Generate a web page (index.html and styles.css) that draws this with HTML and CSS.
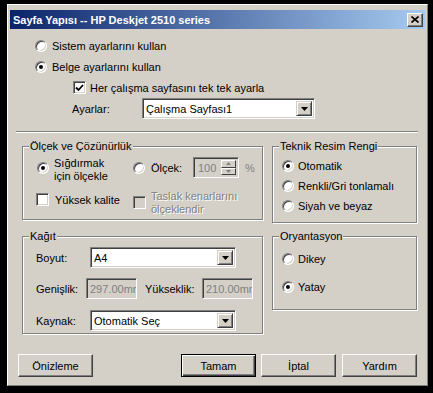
FILE: index.html
```html
<!DOCTYPE html>
<html lang="tr">
<head>
    <meta charset="UTF-8">
    <title>Sayfa Yapısı</title>
    <link rel="stylesheet" href="styles.css">
</head>
<body>
    <div class="window">
        <div class="titlebar">
            <span class="title">Sayfa Yapısı -- HP Deskjet 2510 series</span>
            <span class="close">
                <svg width="8" height="7" viewBox="0 0 8 7"><path d="M0.5 0.5 L7.5 6.5 M7.5 0.5 L0.5 6.5" stroke="#000" stroke-width="1.6" fill="none"/></svg>
            </span>
        </div>

        <div class="scope">
            <div class="row"><span class="radio"></span><span class="opt-text">Sistem ayarlarını kullan</span></div>
            <div class="row"><span class="radio on"></span><span class="opt-text">Belge ayarlarını kullan</span></div>
            <div class="row sub"><span class="check"><svg width="9" height="8" viewBox="0 0 9 8"><path d="M1 3.5 L3.5 6 L8 1" stroke="#000" stroke-width="1.8" fill="none"/></svg></span><span class="chk-text">Her çalışma sayfasını tek tek ayarla</span></div>
            <div class="row sub-label">
                <span class="ayar-label">Ayarlar:</span>
                <div class="combo ayar-combo">
                    <span class="combo-value">Çalışma Sayfası1</span>
                    <span class="drop"><svg width="7" height="4" viewBox="0 0 7 4"><path d="M0 0 H7 L3.5 4 Z" fill="#000"/></svg></span>
                </div>
            </div>
        </div>

        <div class="separator"></div>

        <div class="groups">
            <div class="group scale-group">
                <span class="group-title">Ölçek ve Çözünürlük</span>
                <div class="scale-row">
                    <div class="fit-opt">
                        <span class="radio on"></span>
                        <span class="two-line">Sığdırmak<br>için ölçekle</span>
                    </div>
                    <div class="pct-opt">
                        <span class="radio"></span>
                        <span class="pct-label">Ölçek:</span>
                        <div class="spin">
                            <span class="spin-value">100</span>
                            <span class="spin-btns">
                                <span class="spin-btn"><svg width="5" height="3" viewBox="0 0 5 3"><path d="M2.5 0 L5 3 H0 Z" fill="#808080"/></svg></span>
                                <span class="spin-btn"><svg width="5" height="3" viewBox="0 0 5 3"><path d="M0 0 H5 L2.5 3 Z" fill="#808080"/></svg></span>
                            </span>
                        </div>
                        <span class="pct-sign">%</span>
                    </div>
                </div>
                <div class="quality-row">
                    <div class="hq-opt">
                        <span class="check"></span>
                        <span class="chk-text">Yüksek kalite</span>
                    </div>
                    <div class="draft-opt">
                        <span class="check disabled"></span>
                        <span class="two-line muted">Taslak kenarlarını<br>ölçeklendir</span>
                    </div>
                </div>
            </div>

            <div class="group color-group">
                <span class="group-title">Teknik Resim Rengi</span>
                <div class="radio-list">
                    <div class="list-row"><span class="radio on"></span><span class="opt-text">Otomatik</span></div>
                    <div class="list-row"><span class="radio"></span><span class="opt-text">Renkli/Gri tonlamalı</span></div>
                    <div class="list-row"><span class="radio"></span><span class="opt-text">Siyah ve beyaz</span></div>
                </div>
            </div>

            <div class="group paper-group">
                <span class="group-title">Kağıt</span>
                <div class="paper-row first">
                    <span class="paper-label">Boyut:</span>
                    <div class="combo paper-combo">
                        <span class="combo-value">A4</span>
                        <span class="drop"><svg width="7" height="4" viewBox="0 0 7 4"><path d="M0 0 H7 L3.5 4 Z" fill="#000"/></svg></span>
                    </div>
                </div>
                <div class="paper-row size-row">
                    <span class="width-label">Genişlik:</span>
                    <span class="field">297.00mm</span>
                    <span class="height-label">Yükseklik:</span>
                    <span class="field">210.00mm</span>
                </div>
                <div class="paper-row source-row">
                    <span class="paper-label">Kaynak:</span>
                    <div class="combo paper-combo">
                        <span class="combo-value">Otomatik Seç</span>
                        <span class="drop"><svg width="7" height="4" viewBox="0 0 7 4"><path d="M0 0 H7 L3.5 4 Z" fill="#000"/></svg></span>
                    </div>
                </div>
            </div>

            <div class="group orient-group">
                <span class="group-title">Oryantasyon</span>
                <div class="orient-list">
                    <div class="list-row"><span class="radio"></span><span class="opt-text">Dikey</span></div>
                    <div class="list-row yatay"><span class="radio on"></span><span class="opt-text">Yatay</span></div>
                </div>
            </div>
        </div>

        <div class="buttons">
            <button class="btn preview">Önizleme</button>
            <button class="btn default ok">Tamam</button>
            <button class="btn cancel">İptal</button>
            <button class="btn help">Yardım</button>
        </div>
    </div>
</body>
</html>
```

FILE: styles.css
```css
* {
    box-sizing: border-box;
}

body {
    margin: 0;
    background: #000;
    font-family: "Liberation Sans", Arial, sans-serif;
    font-size: 11px;
    color: #000;
}

.window {
    width: 421px;
    height: 382px;
    margin: 4px 0 0 7px;
    padding: 5px 2px 2px;
    background: #d4d0c8;
    border: 1px solid;
    border-color: #fff #808080 #808080 #fff;
    overflow: hidden;
}

/* title bar */
.titlebar {
    height: 19px;
    display: flex;
    align-items: center;
    justify-content: space-between;
    padding: 0 2px 0 3px;
    background: linear-gradient(to right, #0a246a, #a6caf0);
}

.title {
    color: #fff;
    font-weight: bold;
    font-size: 11px;
}

.close {
    width: 16px;
    height: 14px;
    display: flex;
    align-items: center;
    justify-content: center;
    background: #d4d0c8;
    border: 1px solid;
    border-color: #fff #404040 #404040 #fff;
    box-shadow: inset -1px -1px 0 #808080;
}

/* controls */
.radio {
    flex: none;
    width: 12px;
    height: 12px;
    border-radius: 50%;
    background: #fff;
    border: 1px solid;
    border-color: #808080 #fff #fff #808080;
    box-shadow: inset 1px 1px 0 #404040, inset -1px -1px 0 #d4d0c8;
    display: flex;
    align-items: center;
    justify-content: center;
}

.radio.on::after {
    content: '';
    width: 4px;
    height: 4px;
    border-radius: 50%;
    background: #000;
}

.check {
    flex: none;
    width: 13px;
    height: 13px;
    background: #fff;
    border: 1px solid;
    border-color: #808080 #fff #fff #808080;
    box-shadow: inset 1px 1px 0 #404040, inset -1px -1px 0 #d4d0c8;
    display: flex;
    align-items: center;
    justify-content: center;
}

.check.disabled {
    background: #d4d0c8;
}

.combo {
    display: flex;
    height: 21px;
    padding: 2px;
    background: #fff;
    border: 1px solid;
    border-color: #808080 #fff #fff #808080;
    box-shadow: inset 1px 1px 0 #404040, inset -1px -1px 0 #d4d0c8;
}

.combo-value {
    flex: 1;
    display: flex;
    align-items: center;
    padding-left: 1px;
}

.drop {
    width: 16px;
    display: flex;
    align-items: center;
    justify-content: center;
    background: #d4d0c8;
    border: 1px solid;
    border-color: #d4d0c8 #404040 #404040 #d4d0c8;
    box-shadow: inset 1px 1px 0 #fff, inset -1px -1px 0 #808080;
}

.muted {
    color: #808080;
    text-shadow: 1px 1px 0 #fff;
}

/* top section */
.scope {
    margin-top: 6px;
}

.row {
    height: 21px;
    display: flex;
    align-items: center;
    padding-left: 25px;
}

.opt-text {
    margin-left: 5px;
}

.row.sub {
    padding-left: 63px;
}

.chk-text {
    margin-left: 4px;
}

.row.sub-label {
    padding-left: 62px;
}

.ayar-label {
    width: 70px;
}

.ayar-combo {
    width: 173px;
}

.separator {
    margin: 12px 7px 0 6px;
    border-top: 1px solid #808080;
    border-bottom: 1px solid #fff;
}

/* group boxes */
.groups {
    margin: 13px 0 0 12px;
    display: grid;
    grid-template-columns: 241px 145px;
    column-gap: 9px;
    row-gap: 13px;
    align-items: start;
}

.group {
    border: 1px solid #808080;
    box-shadow: inset 1px 1px 0 #fff, 1px 1px 0 #fff;
}

.group-title {
    display: table;
    margin: -7px 0 0 6px;
    padding: 0 1px;
    line-height: 13px;
    background: #d4d0c8;
}

.scale-group {
    height: 74px;
}

.scale-row {
    display: flex;
    margin-top: 4px;
}

.fit-opt {
    width: 96px;
    margin-left: 14px;
    display: flex;
    align-items: flex-start;
}

.fit-opt .radio {
    margin-top: 5px;
}

.two-line {
    margin-left: 5px;
    line-height: 13px;
}

.pct-opt {
    height: 21px;
    display: flex;
    align-items: center;
}

.pct-label {
    width: 48px;
    padding-left: 6px;
}

.spin {
    width: 46px;
    height: 21px;
    display: flex;
    padding: 2px;
    background: #d4d0c8;
    border: 1px solid;
    border-color: #808080 #fff #fff #808080;
    box-shadow: inset 1px 1px 0 #404040, inset -1px -1px 0 #d4d0c8;
}

.spin-value {
    flex: 1;
    display: flex;
    align-items: center;
    padding-left: 2px;
    color: #808080;
}

.spin-btns {
    width: 15px;
    display: flex;
    flex-direction: column;
}

.spin-btn {
    flex: 1;
    display: flex;
    align-items: center;
    justify-content: center;
    border: 1px solid;
    border-color: #fff #404040 #404040 #fff;
}

.pct-sign {
    margin-left: 6px;
    color: #808080;
}

.quality-row {
    display: flex;
    margin-top: 7px;
}

.hq-opt {
    width: 97px;
    margin-left: 13px;
    margin-top: 3px;
    height: 13px;
    display: flex;
    align-items: center;
}

.hq-opt .chk-text {
    margin-left: 6px;
}

.draft-opt {
    display: flex;
    align-items: flex-start;
}

.draft-opt .check {
    margin-top: 6px;
}

.color-group {
    height: 77px;
}

.radio-list {
    margin-top: 3px;
}

.list-row {
    height: 20px;
    display: flex;
    align-items: center;
    padding-left: 9px;
}

.list-row .opt-text {
    margin-left: 4px;
}

.paper-group {
    height: 98px;
}

.paper-row {
    height: 21px;
    display: flex;
    align-items: center;
    padding-left: 13px;
}

.paper-row.first {
    margin-top: 4px;
}

.paper-row.size-row {
    margin-top: 10px;
}

.paper-row.source-row {
    margin-top: 11px;
}

.paper-label {
    width: 54px;
}

.paper-combo {
    width: 146px;
}

.width-label {
    width: 50px;
}

.height-label {
    width: 57px;
    margin-left: 8px;
}

.field {
    width: 51px;
    height: 21px;
    display: flex;
    align-items: center;
    padding: 0 2px 0 3px;
    overflow: hidden;
    white-space: nowrap;
    color: #808080;
    background: #d4d0c8;
    border: 1px solid;
    border-color: #808080 #fff #fff #808080;
    box-shadow: inset 1px 1px 0 #404040, inset -1px -1px 0 #d4d0c8;
}

.orient-group {
    height: 74px;
}

.orient-list {
    margin-top: 6px;
}

.orient-list .yatay {
    margin-top: 8px;
}

/* bottom buttons */
.buttons {
    display: flex;
    margin-top: 20px;
    padding-left: 8px;
}

.btn {
    width: 75px;
    height: 23px;
    padding: 0;
    font: inherit;
    color: #000;
    background: #d4d0c8;
    border: 1px solid;
    border-color: #fff #404040 #404040 #fff;
    box-shadow: inset -1px -1px 0 #808080;
}

.btn.default {
    border-color: #000;
    box-shadow: inset 1px 1px 0 #fff, inset -1px -1px 0 #404040, inset -2px -2px 0 #808080;
}

.btn.ok {
    margin-left: 88px;
}

.btn.cancel {
    margin-left: 5px;
}

.btn.help {
    margin-left: 6px;
}
```
